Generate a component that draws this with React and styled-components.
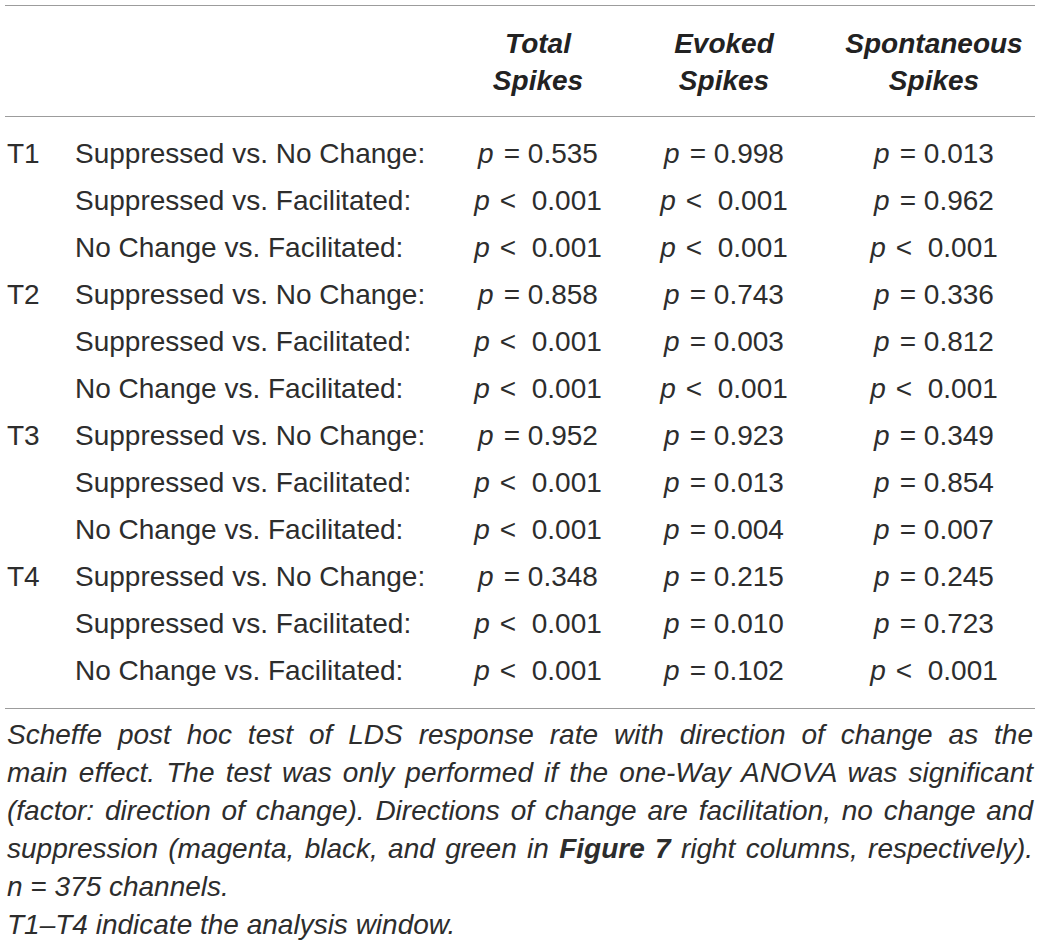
import React from 'react';
import styled, { createGlobalStyle } from 'styled-components';

const GlobalStyle = createGlobalStyle`
  body {
    margin: 0;
    background: #ffffff;
    color: #2d2d2d;
    font-family: 'Liberation Sans', Arial, sans-serif;
  }
`;

const Page = styled.div`
  padding: 5px 6px 0 5px;
`;

// one grid for header and body so the columns line up
const Table = styled.div`
  display: grid;
  grid-template-columns: 70px 386px 154px 218px 202px;
  border-top: 1px solid #9c9c9c;
  border-bottom: 1px solid #9c9c9c;
  font-size: 28px;
`;

const HeadCell = styled.div`
  grid-column: ${(props) => props.col || 'auto'};
  grid-row: 1;
  font-weight: bold;
  font-style: italic;
  text-align: center;
  line-height: 37px;
  padding: 19px 0 17px;
  border-bottom: 1px solid #9c9c9c;
  color: #222;
`;

const Window = styled.div`
  height: 47px;
  line-height: 47px;
  padding-left: 2px;
  margin-top: ${(props) => (props.first ? '13px' : '0')};
  margin-bottom: ${(props) => (props.last ? '14px' : '0')};
`;

const Label = styled(Window)`
  padding-left: 0;
`;

const Value = styled(Window)`
  text-align: center;
  padding-left: 0;
`;

const P = styled.i`
  margin-right: 10px;
`;

const Caption = styled.div`
  margin-top: 7px;
  padding: 0 2px;
  font-style: italic;
  font-size: 28px;
  line-height: 38px;
  color: #2d2d2d;
`;

// the caption keeps the line breaks of the printed table
const CaptionLine = styled.div`
  white-space: nowrap;
  text-align: ${(props) => (props.full ? 'justify' : 'left')};
  text-align-last: ${(props) => (props.full ? 'justify' : 'left')};
`;

const rows = [
  ['T1', [
    ['Suppressed vs. No Change:', '= 0.535', '= 0.998', '= 0.013'],
    ['Suppressed vs. Facilitated:', '< 0.001', '< 0.001', '= 0.962'],
    ['No Change vs. Facilitated:', '< 0.001', '< 0.001', '< 0.001'],
  ]],
  ['T2', [
    ['Suppressed vs. No Change:', '= 0.858', '= 0.743', '= 0.336'],
    ['Suppressed vs. Facilitated:', '< 0.001', '= 0.003', '= 0.812'],
    ['No Change vs. Facilitated:', '< 0.001', '< 0.001', '< 0.001'],
  ]],
  ['T3', [
    ['Suppressed vs. No Change:', '= 0.952', '= 0.923', '= 0.349'],
    ['Suppressed vs. Facilitated:', '< 0.001', '= 0.013', '= 0.854'],
    ['No Change vs. Facilitated:', '< 0.001', '= 0.004', '= 0.007'],
  ]],
  ['T4', [
    ['Suppressed vs. No Change:', '= 0.348', '= 0.215', '= 0.245'],
    ['Suppressed vs. Facilitated:', '< 0.001', '= 0.010', '= 0.723'],
    ['No Change vs. Facilitated:', '< 0.001', '= 0.102', '< 0.001'],
  ]],
];

const PVal = ({ v }) => (
  <>
    <P>p</P>
    {v.startsWith('<') ? '<\u00a0 ' + v.slice(2) : v}
  </>
);

export default function App() {
  const flat = [];
  rows.forEach(([win, comps]) => {
    comps.forEach((c, i) => flat.push({ win: i === 0 ? win : '', c }));
  });

  return (
    <>
      <GlobalStyle />
      <Page>
        <Table>
          <HeadCell col="1 / 3" />
          <HeadCell col="3">Total<br />Spikes</HeadCell>
          <HeadCell col="4">Evoked<br />Spikes</HeadCell>
          <HeadCell col="5">Spontaneous<br />Spikes</HeadCell>
          {flat.map((r, idx) => {
            const first = idx === 0;
            const last = idx === flat.length - 1;
            return (
              <React.Fragment key={idx}>
                <Window first={first} last={last}>{r.win}</Window>
                <Label first={first} last={last}>{r.c[0]}</Label>
                <Value first={first} last={last}><PVal v={r.c[1]} /></Value>
                <Value first={first} last={last}><PVal v={r.c[2]} /></Value>
                <Value first={first} last={last}><PVal v={r.c[3]} /></Value>
              </React.Fragment>
            );
          })}
        </Table>
        <Caption>
          <CaptionLine full>
            Scheffe post hoc test of LDS response rate with direction of change as the
          </CaptionLine>
          <CaptionLine full>
            main effect. The test was only performed if the one-Way ANOVA was significant
          </CaptionLine>
          <CaptionLine full>
            (factor: direction of change). Directions of change are facilitation, no change and
          </CaptionLine>
          <CaptionLine full>
            suppression (magenta, black, and green in <b>Figure 7</b> right columns, respectively).
          </CaptionLine>
          <CaptionLine>n = 375 channels.</CaptionLine>
          <CaptionLine>T1–T4 indicate the analysis window.</CaptionLine>
        </Caption>
      </Page>
    </>
  );
}
